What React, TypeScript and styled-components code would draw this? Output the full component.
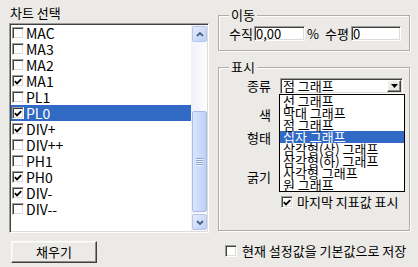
import styled, { createGlobalStyle, css } from "styled-components";

const GlobalStyle = createGlobalStyle`
  html, body {
    margin: 0;
    padding: 0;
    background: #ebeae6;
  }
  body {
    font-family: "Noto Sans CJK KR", "Liberation Sans", sans-serif;
    font-size: 13px;
    color: #000;
  }
`;

const sunken = css`
  border: 1px solid;
  border-color: #9d9d99 #ffffff #ffffff #9d9d99;
  box-shadow: inset 1px 1px #404040, inset -1px -1px #dedcd6;
`;

const raised = css`
  border: 1px solid;
  border-color: #ffffff #404040 #404040 #ffffff;
  box-shadow: inset -1px -1px #8d8c88, inset 1px 1px #f4f3ef;
`;

const chartItems: [string, boolean][] = [
  ["MAC", false],
  ["MA3", false],
  ["MA2", false],
  ["MA1", true],
  ["PL1", false],
  ["PL0", true],
  ["DIV+", true],
  ["DIV++", false],
  ["PH1", false],
  ["PH0", true],
  ["DIV-", true],
  ["DIV--", false],
];
const selectedChart = 5;

const graphTypes = [
  "선 그래프",
  "막대 그래프",
  "점 그래프",
  "십자 그래프",
  "삼각형(상) 그래프",
  "삼각형(하) 그래프",
  "사각형 그래프",
  "원 그래프",
];
const hoverType = 3;

const Dialog = styled.div`
  width: 418px;
  height: 267px;
  display: flex;
  gap: 9px;
  padding-left: 9px;
  box-sizing: border-box;
  overflow: hidden;
`;

const LeftPane = styled.div`
  width: 200px;
  display: flex;
  flex-direction: column;
`;

const PaneTitle = styled.div`
  height: 17px;
  padding: 6px 0 0 1px;
  line-height: 14px;
`;

const ListBox = styled.div`
  ${sunken};
  height: 206px;
  padding: 1px;
  background: #fff;
  display: flex;
`;

const Rows = styled.div`
  flex: 1;
`;

const Row = styled.div<{ $selected?: boolean }>`
  height: 16px;
  display: flex;
  align-items: center;
  padding-left: 1px;
  font-size: 14px;
  line-height: 16px;
  background: ${(p) => (p.$selected ? "#316ac5" : "transparent")};
  color: ${(p) => (p.$selected ? "#fff" : "#000")};
`;

const RowText = styled.span`
  margin-left: 2px;
`;

const Box = styled.span`
  ${sunken};
  width: 10px;
  height: 10px;
  background: #fff;
  display: flex;
  align-items: center;
  justify-content: center;
  flex-shrink: 0;
`;

const ScrollBar = styled.div`
  width: 16px;
  display: flex;
  flex-direction: column;
  background: linear-gradient(to right, #eef1f8, #fcfcfe);
`;

const ScrollButton = styled.div`
  height: 14px;
  width: 13px;
  margin: 1px 0 1px 1px;
  border: 1px solid #b7c6e9;
  border-radius: 2px;
  background: linear-gradient(135deg, #e6edfd, #bccff7);
  display: flex;
  align-items: center;
  justify-content: center;
`;

const Track = styled.div`
  flex: 1;
  display: flex;
  flex-direction: column;
  justify-content: flex-end;
`;

const Thumb = styled.div`
  height: 99px;
  width: 13px;
  margin: 0 0 1px 1px;
  border: 1px solid #a9bbe6;
  border-radius: 2px;
  background: linear-gradient(to right, #dae5fd, #bdd0f7);
  display: flex;
  flex-direction: column;
  align-items: center;
  justify-content: center;
  gap: 1px;
`;

const Grip = styled.span`
  width: 7px;
  height: 1px;
  background: #8ea4d6;
  box-shadow: 0 1px #eef3fe;
`;

const PushButton = styled.div`
  ${raised};
  width: 84px;
  height: 20px;
  margin: 8px 0 0 2px;
  display: flex;
  align-items: center;
  justify-content: center;
  line-height: 14px;
`;

const RightPane = styled.div`
  width: 192px;
  display: flex;
  flex-direction: column;
`;

const Group = styled.fieldset<{ $top: number; $bottom: number }>`
  margin: ${(p) => p.$top}px 0 0 0;
  padding: 4px 8px ${(p) => p.$bottom}px 10px;
  min-width: 0;
  border: 1px solid #aeada6;
  box-shadow: inset 1px 1px #fff, 1px 1px #fff;
`;

const Legend = styled.legend`
  padding: 0 2px;
  line-height: 14px;
  background: #ebeae6;
`;

const InlineRow = styled.div`
  display: flex;
  align-items: center;
  height: 15px;
`;

const Caption = styled.span<{ $left?: number }>`
  margin-left: ${(p) => p.$left ?? 0}px;
  line-height: 14px;
  white-space: nowrap;
`;

const TextInput = styled.div<{ $width: number; $left: number }>`
  ${sunken};
  width: ${(p) => p.$width - 4}px;
  height: 13px;
  padding: 0 1px;
  margin-left: ${(p) => p.$left}px;
  background: #fff;
  line-height: 13px;
`;

const Field = styled.div<{ $gap: number }>`
  display: grid;
  grid-template-columns: 42px 123px;
  column-gap: 9px;
  align-items: center;
  height: 16px;
  margin-top: ${(p) => p.$gap}px;
`;

const FieldLabel = styled.span`
  text-align: right;
  line-height: 14px;
`;

const ComboWrap = styled.div`
  position: relative;
`;

const Combo = styled.div`
  ${sunken};
  height: 12px;
  padding: 1px;
  background: #fff;
  display: flex;
  align-items: center;
`;

const ComboText = styled.span`
  flex: 1;
  padding-left: 1px;
  line-height: 12px;
`;

const DropButton = styled.div`
  ${raised};
  width: 12px;
  height: 10px;
  background: #ebeae6;
  display: flex;
  align-items: center;
  justify-content: center;
`;

const Popup = styled.div`
  position: absolute;
  left: -1px;
  top: 16px;
  width: 124px;
  border: 1px solid #000;
  background: #fff;
  z-index: 2;
`;

const PopupItem = styled.div<{ $active?: boolean }>`
  height: 12px;
  line-height: 12px;
  padding-left: 3px;
  white-space: nowrap;
  background: ${(p) => (p.$active ? "#316ac5" : "transparent")};
  color: ${(p) => (p.$active ? "#fff" : "#000")};
`;

const CheckLine = styled.div<{ $gap: number; $indent: number; $textGap: number }>`
  display: flex;
  align-items: center;
  height: 16px;
  margin-top: ${(p) => p.$gap}px;
  padding-left: ${(p) => p.$indent}px;
  gap: ${(p) => p.$textGap}px;
  line-height: 14px;
  white-space: nowrap;
`;

const Check = () => (
  <svg width="8" height="7" viewBox="0 0 8 7">
    <polyline points="0.8,3.2 3,5.4 7.2,1.1" fill="none" stroke="#000" strokeWidth="1.8" />
  </svg>
);

const CheckBox = ({ checked }: { checked: boolean }) => <Box>{checked && <Check />}</Box>;

const Chevron = ({ down }: { down?: boolean }) => (
  <svg width="8" height="5" viewBox="0 0 8 5">
    <polyline
      points={down ? "1,1 4,4 7,1" : "1,4 4,1 7,4"}
      fill="none"
      stroke="#4d6185"
      strokeWidth="1.8"
    />
  </svg>
);

export default function App() {
  return (
    <>
      <GlobalStyle />
      <Dialog>
        <LeftPane>
          <PaneTitle>차트 선택</PaneTitle>
          <ListBox>
            <Rows>
              {chartItems.map(([name, checked], i) => (
                <Row key={name} $selected={i === selectedChart}>
                  <CheckBox checked={checked} />
                  <RowText>{name}</RowText>
                </Row>
              ))}
            </Rows>
            <ScrollBar>
              <ScrollButton>
                <Chevron />
              </ScrollButton>
              <Track>
                <Thumb>
                  <Grip />
                  <Grip />
                  <Grip />
                  <Grip />
                </Thumb>
              </Track>
              <ScrollButton>
                <Chevron down />
              </ScrollButton>
            </ScrollBar>
          </ListBox>
          <PushButton>채우기</PushButton>
        </LeftPane>

        <RightPane>
          <Group $top={8} $bottom={9}>
            <Legend>이동</Legend>
            <InlineRow>
              <Caption>수직</Caption>
              <TextInput $width={52} $left={1}>0,00</TextInput>
              <Caption $left={2}>%</Caption>
              <Caption $left={6}>수평</Caption>
              <TextInput $width={51} $left={2}>0</TextInput>
            </InlineRow>
          </Group>

          <Group $top={9} $bottom={20}>
            <Legend>표시</Legend>
            <Field $gap={0}>
              <FieldLabel>종류</FieldLabel>
              <ComboWrap>
                <Combo>
                  <ComboText>점 그래프</ComboText>
                  <DropButton>
                    <svg width="7" height="4" viewBox="0 0 7 4">
                      <polygon points="0,0 7,0 3.5,4" fill="#000" />
                    </svg>
                  </DropButton>
                </Combo>
                <Popup>
                  {graphTypes.map((t, i) => (
                    <PopupItem key={t} $active={i === hoverType}>
                      {t}
                    </PopupItem>
                  ))}
                </Popup>
              </ComboWrap>
            </Field>
            <Field $gap={13}>
              <FieldLabel>색</FieldLabel>
            </Field>
            <Field $gap={7}>
              <FieldLabel>형태</FieldLabel>
            </Field>
            <Field $gap={23}>
              <FieldLabel>굵기</FieldLabel>
            </Field>
            <CheckLine $gap={9} $indent={52} $textGap={4}>
              <CheckBox checked />
              <span>마지막 지표값 표시</span>
            </CheckLine>
          </Group>

          <CheckLine $gap={12} $indent={7} $textGap={5}>
            <CheckBox checked={false} />
            <span>현재 설정값을 기본값으로 저장</span>
          </CheckLine>
        </RightPane>
      </Dialog>
    </>
  );
}
